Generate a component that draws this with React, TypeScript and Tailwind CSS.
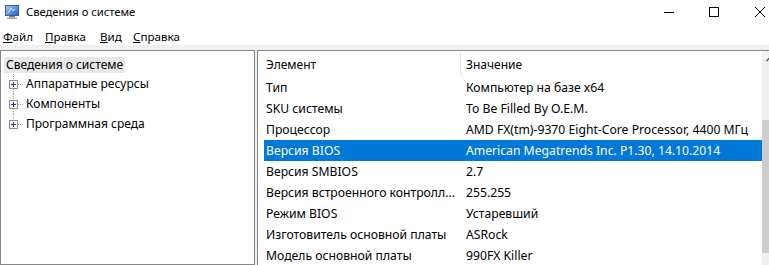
import React from "react";

const rows: [string, string][] = [
  ["Тип", "Компьютер на базе x64"],
  ["SKU системы", "To Be Filled By O.E.M."],
  ["Процессор", "AMD FX(tm)-9370 Eight-Core Processor, 4400 МГц"],
  ["Версия BIOS", "American Megatrends Inc. P1.30, 14.10.2014"],
  ["Версия SMBIOS", "2.7"],
  ["Версия встроенного контролл...", "255.255"],
  ["Режим BIOS", "Устаревший"],
  ["Изготовитель основной платы", "ASRock"],
  ["Модель основной платы", "990FX Killer"],
];

function TreeGlyph({ last }: { last?: boolean }) {
  return (
    <svg width="24" height="20" viewBox="0 0 24 20" className="shrink-0">
      <line x1="12.5" y1="0" x2="12.5" y2="6" stroke="#a0a0a0" strokeDasharray="1 1" />
      {!last && <line x1="12.5" y1="15" x2="12.5" y2="20" stroke="#a0a0a0" strokeDasharray="1 1" />}
      <line x1="17" y1="10.5" x2="23" y2="10.5" stroke="#a0a0a0" strokeDasharray="1 1" />
      <rect x="8.5" y="6.5" width="8" height="8" fill="#f7f7f7" stroke="#8f8f8f" />
      <line x1="10" y1="10.5" x2="15" y2="10.5" stroke="#26408a" />
      <line x1="12.5" y1="8" x2="12.5" y2="13" stroke="#26408a" />
    </svg>
  );
}

export default function App() {
  return (
    <div className="w-[769px] h-[265px] overflow-hidden bg-white flex flex-col text-[12px] text-black font-['Noto_Sans',sans-serif] leading-[16px]">
      {/* Title bar */}
      <div className="h-[26px] flex items-start shrink-0">
        <svg width="16" height="16" viewBox="0 0 16 16" className="ml-[4px] mt-[4px]">
          <defs>
            <linearGradient id="scr" x1="0" y1="0" x2="1" y2="1">
              <stop offset="0" stopColor="#9fd0ff" />
              <stop offset="1" stopColor="#1f5fc8" />
            </linearGradient>
          </defs>
          <rect x="1.5" y="1.5" width="13" height="10" fill="url(#scr)" stroke="#3c5a8a" />
          <path d="M4 9 L7 4 L9 7 L11 5" stroke="#ffffff" strokeWidth="1" fill="none" opacity="0.8" />
          <rect x="5" y="12" width="6" height="1.5" fill="#7d7d7d" />
          <rect x="3" y="13.5" width="10" height="1.5" fill="#a8a8a8" />
        </svg>
        <span className="ml-[6px] mt-[4px] text-[11.2px]">Сведения о системе</span>
        <div className="ml-auto flex items-start pt-[7px] pr-[4px]">
          <svg width="10" height="10" viewBox="0 0 10 10">
            <line x1="0" y1="5.5" x2="10" y2="5.5" stroke="#000" />
          </svg>
          <svg width="10" height="10" viewBox="0 0 10 10" className="ml-[35px]">
            <rect x="0.5" y="0.5" width="9" height="9" fill="none" stroke="#000" />
          </svg>
          <svg width="10" height="10" viewBox="0 0 10 10" className="ml-[36px]">
            <line x1="0" y1="0" x2="10" y2="10" stroke="#000" />
            <line x1="10" y1="0" x2="0" y2="10" stroke="#000" />
          </svg>
        </div>
      </div>

      {/* Menu bar */}
      <div className="h-[19px] flex items-center pl-[3px] pt-[3px] shrink-0 text-[11.6px]">
        <span className="w-[42px]"><span className="underline">Ф</span>айл</span>
        <span className="w-[55px]"><span className="underline">П</span>равка</span>
        <span className="w-[33px]"><span className="underline">В</span>ид</span>
        <span><span className="underline">С</span>правка</span>
      </div>

      {/* Content */}
      <div className="flex-1 bg-[#f0f0f0] pt-[5px] flex min-h-0">
        <div className="w-[255px] shrink-0 border border-[#828790] bg-white pt-[6px] pl-[3px]">
          <div className="h-[16px] w-fit bg-[#e8e8e8] px-[2px] flex items-center">Сведения о системе</div>
          <div className="mt-[1px] -ml-[3px]">
            {["Аппаратные ресурсы", "Компоненты", "Программная среда"].map((t, i) => (
              <div key={t} className="h-[20px] flex items-center">
                <TreeGlyph last={i === 2} />
                <span className="ml-[1px]">{t}</span>
              </div>
            ))}
          </div>
        </div>

        <div className="ml-[2px] w-[523px] shrink-0 border-l border-t border-[#828790] bg-white flex">
          <div className="w-[504px] shrink-0 pl-[6px] pt-[1px] overflow-hidden">
            <div className="h-[25px] flex items-stretch">
              <div className="w-[196px] pl-[2px] flex items-center">Элемент</div>
              <div className="w-px bg-[#e5e5e5]" />
              <div className="pl-[5px] flex items-center">Значение</div>
            </div>
            {rows.map(([k, v], i) => (
              <div
                key={k}
                className={
                  i === 3
                    ? "h-[21px] flex items-center bg-[#0078d7] text-white text-[12.2px]"
                    : "h-[21px] flex items-center text-[12.2px]"
                }
              >
                <div className="w-[200px] shrink-0 pl-[2px] whitespace-nowrap overflow-hidden leading-[18px]">{k}</div>
                <div className="flex-1 pl-[2px] whitespace-nowrap overflow-hidden leading-[18px]">{v}</div>
              </div>
            ))}
          </div>
          <div className="w-[17px] shrink-0 bg-[#f0f0f0] flex flex-col">
            <svg width="17" height="17" viewBox="0 0 17 17">
              <path d="M4.5 10 L8.5 6 L12.5 10" stroke="#606060" strokeWidth="1.5" fill="none" />
            </svg>
            <div className="h-[52px]" />
            <div className="h-[133px] bg-[#cdcdcd]" />
          </div>
        </div>
      </div>
    </div>
  );
}
